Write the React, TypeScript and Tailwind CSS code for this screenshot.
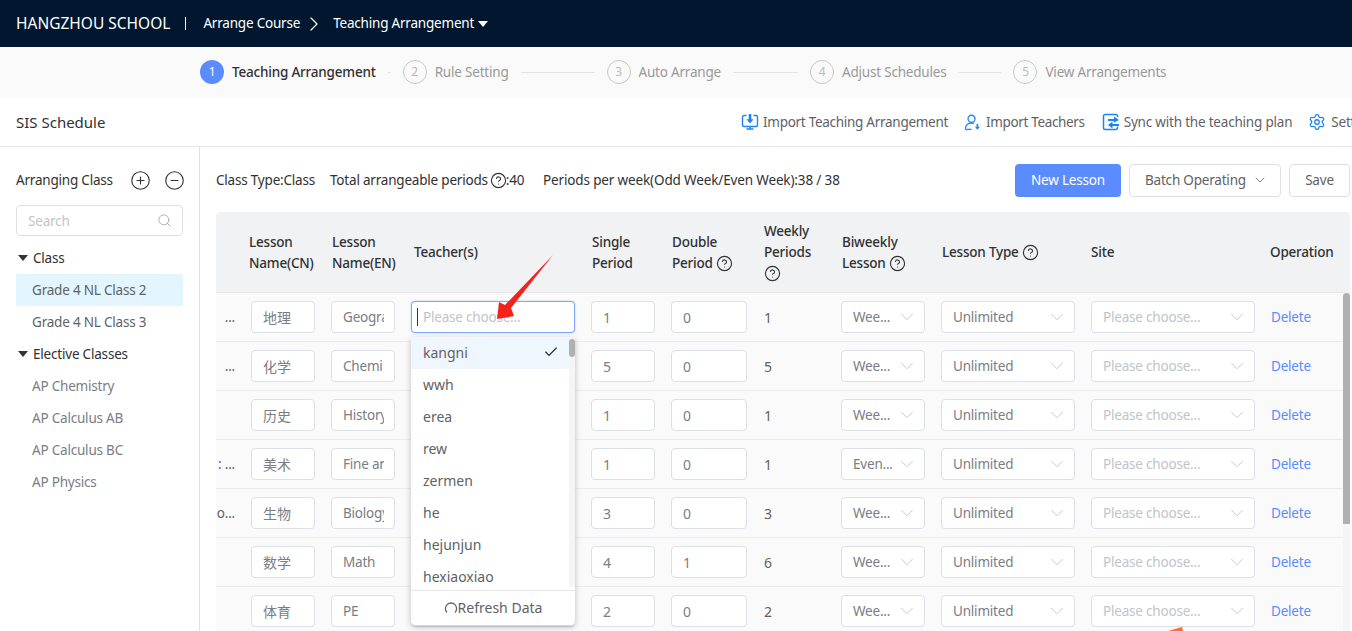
import React from "react";
import {
  Check,
  ChevronDown,
  ChevronRight,
  CircleHelp,
  CircleMinus,
  CirclePlus,
  Search,
  Settings,
} from "lucide-react";

const GRID =
  "grid grid-cols-[25px_82px_80px_180px_80px_92px_78px_100px_150px_180px_80px]";

const steps = [
  { n: 1, label: "Teaching Arrangement", line: "w-[3px]" },
  { n: 2, label: "Rule Setting", line: "w-[74px]" },
  { n: 3, label: "Auto Arrange", line: "w-[65px]" },
  { n: 4, label: "Adjust Schedules", line: "w-[43px]" },
  { n: 5, label: "View Arrangements", line: "" },
];

const rows = [
  { clip: "...", cn: "地理", en: "Geogra", single: 1, double: 0, weekly: 1, bi: "Wee..." },
  { clip: "...", cn: "化学", en: "Chemi", single: 5, double: 0, weekly: 5, bi: "Wee..." },
  { clip: "", cn: "历史", en: "History", single: 1, double: 0, weekly: 1, bi: "Wee..." },
  { clip: ": ...", cn: "美术", en: "Fine art", single: 1, double: 0, weekly: 1, bi: "Even..." },
  { clip: "o...", cn: "生物", en: "Biology", single: 3, double: 0, weekly: 3, bi: "Wee..." },
  { clip: "", cn: "数学", en: "Math", single: 4, double: 1, weekly: 6, bi: "Wee..." },
  { clip: "", cn: "体育", en: "PE", single: 2, double: 0, weekly: 2, bi: "Wee..." },
];

const teachers = ["kangni", "wwh", "erea", "rew", "zermen", "he", "hejunjun", "hexiaoxiao"];

const Help = ({ className = "" }: { className?: string }) => (
  <CircleHelp className={`w-[17px] h-[17px] text-[#333] inline-block align-[-4px] ${className}`} strokeWidth={1.6} />
);

const Field = ({ value, className = "" }: { value: string | number; className?: string }) => (
  <div className={`h-8 border border-[#dcdfe6] rounded bg-white pl-[11px] pr-[10px] flex items-center text-[#7a7d84] ${className}`}>
    <span className="overflow-hidden whitespace-nowrap w-full">{value}</span>
  </div>
);

const Select = ({ value, className = "", muted = false }: { value: string; className?: string; muted?: boolean }) => (
  <div className={`h-8 border border-[#dcdfe6] rounded bg-white pl-[11px] pr-[6px] flex items-center justify-between ${className}`}>
    <span className={muted ? "text-[#c0c4cc]" : "text-[#7a7d84]"}>{value}</span>
    <ChevronDown className="w-[22px] h-[22px] text-[#c0c4cc]" strokeWidth={1} />
  </div>
);

const Caret = () => (
  <span className="w-0 h-0 border-x-[5px] border-x-transparent border-t-[6px] border-t-[#333] mr-[5px] ml-px" />
);

const App = () => {
  return (
    <div className="relative w-[1352px] h-[631px] overflow-hidden bg-white text-[13.5px] tracking-[-0.2px] text-[#606266] font-['Noto_Sans','Noto_Sans_CJK_SC',sans-serif]">
      <div className="h-[47px] bg-[#00172f] text-white flex items-center pl-4">
        <span className="text-[15.5px] tracking-normal">HANGZHOU SCHOOL</span>
        <span className="ml-[15px] mr-[17px] w-px h-[13px] bg-white" />
        <span>Arrange Course</span>
        <ChevronRight className="w-6 h-6 mx-[2px]" strokeWidth={1.2} />
        <span className="ml-[5px]">Teaching Arrangement</span>
        <span className="ml-[4px] w-0 h-0 border-x-[5px] border-x-transparent border-t-[6px] border-t-white" />
      </div>

      <div className="h-[50px] bg-[#fafafa] flex items-center pl-[200px]">
        {steps.map((s) => (
          <div key={s.n} className="flex items-center">
            <span
              className={`w-6 h-6 rounded-full flex items-center justify-center text-[12px] ${
                s.n === 1 ? "bg-[#5b8cff] text-white" : "border border-[#c8c8c8] text-[#bbb]"
              }`}
            >
              {s.n}
            </span>
            <span className={`ml-2 ${s.n === 1 ? "text-[#303133] font-medium" : "text-[#999]"}`}>{s.label}</span>
            {s.line && <span className={`h-px bg-[#e4e4e4] mx-3 ${s.line}`} />}
          </div>
        ))}
      </div>

      <div className="h-[50px] border-b border-[#e8e8e8] flex items-center whitespace-nowrap pt-px">
        <span className="w-[741px] shrink-0 pl-4 text-[15px] tracking-normal text-[#303133]">SIS Schedule</span>
        <div className="flex items-center gap-[4px] mr-4">
          <svg viewBox="0 0 18 18" className="w-[18px] h-[18px] text-[#1a85f0]" fill="none" stroke="currentColor" strokeWidth="1.4">
            <path d="M5.5 2.5H3A1.5 1.5 0 0 0 1.5 4v8A1.5 1.5 0 0 0 3 13.5h12a1.5 1.5 0 0 0 1.5-1.5V4A1.5 1.5 0 0 0 15 2.5h-2.5" />
            <path d="M9 13.5V16M5.5 16h7" />
            <path d="M9 1v6" strokeWidth="2.6" />
            <path d="M5.5 6.2h7L9 10.5z" fill="currentColor" stroke="none" />
          </svg>
          <span className="tracking-[-0.28px]">Import Teaching Arrangement</span>
        </div>
        <div className="flex items-center gap-[5px] mr-[17px]">
          <svg viewBox="0 0 18 18" className="w-[17px] h-[17px] text-[#1a85f0]" fill="none" stroke="currentColor" strokeWidth="1.4">
            <circle cx="8" cy="5" r="3.7" />
            <path d="M1.5 15.5C1.5 12 4.5 9.5 8 9.5c.9 0 1.7.1 2.4.4M1.5 15.5c0 .8 1 1.3 1.8.8M3.3 16.3H8" />
            <path d="M14.2 10.5v4" strokeWidth="1.8" />
            <path d="M11.5 13.5h5.4l-2.7 3.2z" fill="currentColor" stroke="none" />
          </svg>
          <span className="tracking-[-0.35px]">Import Teachers</span>
        </div>
        <div className="flex items-center gap-[4px] mr-4">
          <svg viewBox="0 0 18 18" className="w-[18px] h-[18px] text-[#1a85f0]" fill="none" stroke="currentColor" strokeWidth="1.5">
            <path d="M15.5 4V3A1.5 1.5 0 0 0 14 1.5H3A1.5 1.5 0 0 0 1.5 3v12A1.5 1.5 0 0 0 3 16.5h11a1.5 1.5 0 0 0 1.5-1.5v-1.5" />
            <path d="M6 7h7M10 12h7" strokeWidth="2" />
            <path d="M12 3.5 17 7l-5 2.5zM10.5 8.5v7L6 12z" fill="currentColor" stroke="none" />
          </svg>
          <span>Sync with the teaching plan</span>
        </div>
        <div className="flex items-center gap-[5px]">
          <Settings className="w-[18px] h-[18px] text-[#1a85f0]" strokeWidth={1.7} />
          <span>Settings</span>
        </div>
      </div>

      <div className="flex h-[484px]">
        <aside className="w-[200px] shrink-0 border-r border-[#e0e0e0] pl-4 pr-4">
          <div className="h-[58px] flex items-center pt-[8px]">
            <span className="text-[#303133]">Arranging Class</span>
            <CirclePlus className="w-[21px] h-[21px] text-[#333] ml-auto" strokeWidth={1.3} />
            <CircleMinus className="w-[21px] h-[21px] text-[#333] ml-[13px] -mr-[2px]" strokeWidth={1.3} />
          </div>
          <div className="h-[31px] border border-[#dcdfe6] rounded flex items-center justify-between pl-[11px] pr-[10px] text-[#c0c4cc]">
            <span className="pt-px">Search</span>
            <Search className="w-[15px] h-[15px] text-[#aaa]" strokeWidth={1.5} />
          </div>
          <div className="mt-[6px]">
            <div className="h-8 flex items-center pl-[1px] text-[#303133]"><Caret />Class</div>
            <div className="h-8 flex items-center pl-4 bg-[#e3f5fe]">Grade 4 NL Class 2</div>
            <div className="h-8 flex items-center pl-4">Grade 4 NL Class 3</div>
            <div className="h-8 flex items-center pl-[1px] text-[#303133]"><Caret />Elective Classes</div>
            {["AP Chemistry", "AP Calculus AB", "AP Calculus BC", "AP Physics"].map((c) => (
              <div key={c} className="h-8 flex items-center pl-4 text-[#7a7d84]">{c}</div>
            ))}
          </div>
        </aside>

        <main className="flex-1 min-w-0 pl-4 pr-[2px]">
          <div className="h-[65px] flex items-center whitespace-nowrap text-[#303133] pt-px">
            <span className="w-[114px]">Class Type:Class</span>
            <span className="w-[213px] flex items-center">Total arrangeable periods<Help className="ml-[2px] -mr-px" />:40</span>
            <span className="tracking-[-0.14px]">Periods per week(Odd Week/Even Week):38 / 38</span>
            <div className="ml-auto flex items-center gap-2">
              <button className="w-[106px] h-[33px] rounded bg-[#5b8cff] text-white">New Lesson</button>
              <button className="w-[152px] h-[33px] rounded border border-[#dcdfe6] flex items-center justify-between pl-[15px] pr-3 text-[#606266]">
                Batch Operating <ChevronDown className="w-4 h-4" strokeWidth={1.2} />
              </button>
              <button className="w-[61px] h-[33px] rounded border border-[#dcdfe6] text-[#606266]">Save</button>
            </div>
          </div>

          <div className="flex h-[419px] rounded-t overflow-hidden">
            <div className="w-[1127px] overflow-hidden shrink-0">
              <div className={`${GRID} h-[81px] pt-px bg-[#f1f2f4] border-b border-[#e8e8e8] items-center text-[#303133] font-medium leading-[21px]`}>
                <span />
                <span className="pl-2">Lesson<br />Name(CN)</span>
                <span className="pl-[9px]">Lesson<br />Name(EN)</span>
                <span className="pl-[11px]">Teacher(s)</span>
                <span className="pl-[9px]">Single<br />Period</span>
                <span className="pl-[9px]">Double<br />Period <Help /></span>
                <span className="pl-[9px]">Weekly<br />Periods<br /><Help /></span>
                <span className="pl-[9px]">Biweekly<br />Lesson <Help /></span>
                <span className="pl-[9px]">Lesson Type <Help /></span>
                <span className="pl-2">Site</span>
                <span className="pl-[7px]">Operation</span>
              </div>
              {rows.map((r) => (
                <div key={r.cn} className={`${GRID} h-[49px] bg-[#fafafa] border-b border-[#ebebeb] items-center`}>
                  <span className="whitespace-nowrap overflow-hidden text-right pr-[6px]">{r.clip}</span>
                  <div className="pl-[10px] pr-[8px]"><Field value={r.cn} className="text-[14px] tracking-normal" /></div>
                  <div className="pl-2"><Field value={r.en} className="w-16" /></div>
                  <div className="pl-2"><Field value="" className="w-[164px]" /></div>
                  <div className="pl-2"><Field value={r.single} className="w-16 text-[14px] tracking-normal" /></div>
                  <div className="pl-2"><Field value={r.double} className="w-[76px] text-[14px] tracking-normal" /></div>
                  <span className="pl-[9px] text-[14px] tracking-normal">{r.weekly}</span>
                  <div className="pl-2"><Select value={r.bi} className="w-[84px]" /></div>
                  <div className="pl-2"><Select value="Unlimited" className="w-[134px]" /></div>
                  <div className="pl-2"><Select value="Please choose..." muted className="w-[164px]" /></div>
                  <span className="pl-2 text-[#5b8cff]">Delete</span>
                </div>
              ))}
            </div>
            <div className="w-[7px] shrink-0 bg-[#f1f2f4] pt-[81px]">
              <div className="h-full bg-[#f5f5f5]">
                <div className="h-[231px] bg-[#b0b0b0] rounded-t-sm" />
              </div>
            </div>
          </div>
        </main>
      </div>

      {/* open teacher select over the table */}
      <div className="absolute left-[411px] top-[301px] w-[164px] h-8 rounded border border-[#7ea6ff] shadow-[0_0_2px_#a9c4ff] bg-white flex items-center pl-[5px]">
        <span className="w-px h-[18px] bg-[#333] mr-[5px]" />
        <span className="text-[#c0c4cc]">Please choose...</span>
      </div>
      <div className="absolute left-[411px] top-[337px] w-[164px] h-[288px] rounded bg-white shadow-[0_2px_6px_rgba(0,0,0,0.25)] flex flex-col text-[14px] tracking-normal">
        <div className="relative h-[253px] overflow-hidden pr-[6px]">
          {teachers.map((t, i) => (
            <div key={t} className={`h-8 pl-3 pr-[10px] pb-[2px] flex items-center justify-between ${i === 0 ? "bg-[#f0f6fe]" : ""}`}>
              {t}
              {i === 0 && <Check className="w-[16px] h-[16px] text-[#222]" strokeWidth={1.7} />}
            </div>
          ))}
          <div className="absolute right-0 top-0 w-[6px] h-[250px] bg-[#f5f5f5]">
            <div className="mt-[2px] w-[6px] h-[18px] rounded-sm bg-[#b0b0b0]" />
          </div>
        </div>
        <div className="flex-1 border-t border-[#e8e8e8] flex items-center justify-center pb-[2px]">
          <svg viewBox="0 0 14 14" className="w-[14px] h-[14px]" fill="none" stroke="#606266" strokeWidth="1.3">
            <path d="M3 12.5A5.6 5.6 0 1 1 11 12.5" />
          </svg>
          <span>Refresh Data</span>
        </div>
      </div>

      {/* annotation arrows from the screenshot */}
      <svg className="absolute left-0 top-0 w-[1352px] h-[631px] pointer-events-none" viewBox="0 0 1352 631">
        <polygon points="553,255 511,308 514,316 497,319 499,302 505,305" fill="#f5221b" />
        <polygon points="1168,631 1182,627 1183,631" fill="#ff6a3c" />
      </svg>
    </div>
  );
};

export default App;
